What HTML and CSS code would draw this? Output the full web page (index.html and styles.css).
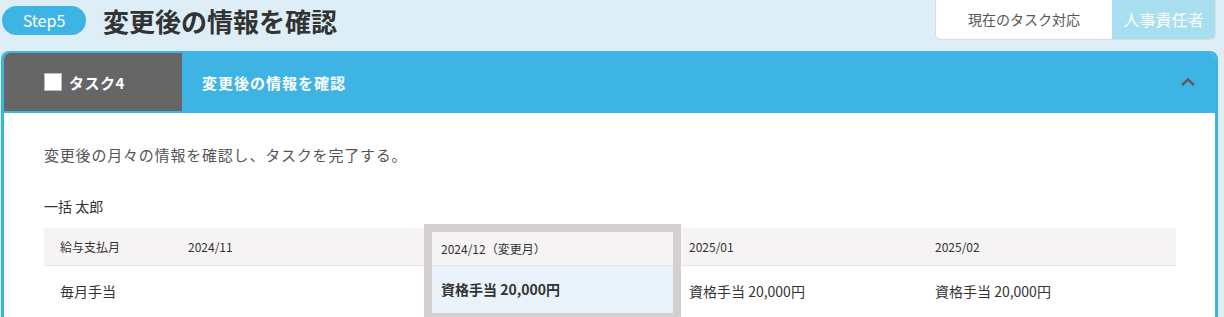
FILE: index.html
```html
<!DOCTYPE html>
<html lang="ja">
<head>
<meta charset="utf-8">
<title>Step5</title>
<link rel="stylesheet" href="styles.css">
</head>
<body>
<div class="page">
  <div class="topbar">
    <div class="step">Step5</div>
    <h1 class="title">変更後の情報を確認</h1>
    <div class="role">
      <span class="role-label">現在のタスク対応</span>
      <span class="role-name">人事責任者</span>
    </div>
  </div>
  <section class="card">
    <header class="card-head">
      <div class="task-tag"><span class="check"></span><span class="task-no">タスク4</span></div>
      <div class="task-title">変更後の情報を確認</div>
      <svg class="chev" width="14" height="8" viewBox="0 0 14 8"><path d="M1 7 L7 1.5 L13 7" fill="none" stroke="#5a5a5a" stroke-width="2.4"/></svg>
    </header>
    <div class="card-body">
      <p class="desc">変更後の月々の情報を確認し、タスクを完了する。</p>
      <p class="name">一括 太郎</p>
      <div class="table">
        <div class="col col-label">
          <div class="th">給与支払月</div>
          <div class="td">毎月手当</div>
        </div>
        <div class="col c1">
          <div class="th">2024/11</div>
          <div class="td"></div>
        </div>
        <div class="col c2 hl">
          <div class="th">2024/12（変更月）</div>
          <div class="td"><b>資格手当 20,000円</b></div>
        </div>
        <div class="col c3">
          <div class="th">2025/01</div>
          <div class="td">資格手当 20,000円</div>
        </div>
        <div class="col c4">
          <div class="th">2025/02</div>
          <div class="td">資格手当 20,000円</div>
        </div>
      </div>
    </div>
  </section>
</div>
</body>
</html>
```

FILE: styles.css
```css
html, body {
  margin: 0;
  padding: 0;
  background: #ddeef6;
  font-family: "Noto Sans CJK JP", "Noto Sans", sans-serif;
  color: #333;
}
.page {
  padding: 0 6px 0 1px;
}
.topbar {
  display: flex;
  align-items: center;
  height: 40px;
}
.step {
  margin-left: 1px;
  width: 84px;
  height: 29px;
  border-radius: 15px;
  background: #3eb4e5;
  color: #fff;
  font-size: 16px;
  line-height: 29px;
  text-align: center;
}
.title {
  margin: 1px 0 0 17px;
  font-size: 26px;
  font-weight: 700;
  color: #333;
  line-height: 36px;
  letter-spacing: 0;
}
.role {
  margin-left: auto;
  margin-right: 2px;
  align-self: flex-start;
  display: flex;
  height: 40px;
  border: 1px solid #dcdcdc;
  border-top: none;
  border-radius: 0 0 6px 6px;
  overflow: hidden;
  box-sizing: border-box;
}
.role-label {
  width: 176px;
  background: #fff;
  color: #555;
  font-size: 14px;
  text-align: center;
  line-height: 39px;
}
.role-name {
  width: 103px;
  background: #a7def0;
  color: #fff;
  font-size: 16px;
  text-align: center;
  line-height: 39px;
}
.card {
  margin-top: 11px;
  background: #fff;
  border: 3px solid #3eb4e5;
  border-top-width: 2px;
  border-bottom: none;
  border-radius: 8px 8px 0 0;
  overflow: hidden;
}
.card-head {
  display: flex;
  align-items: center;
  background: #3eb4e5;
  height: 60px;
  padding-bottom: 2px;
  box-sizing: border-box;
}
.task-tag {
  width: 178px;
  height: 58px;
  background: #666;
  display: flex;
  align-items: center;
  padding-left: 40px;
  box-sizing: border-box;
  border-radius: 6px 0 0 0;
}
.check {
  width: 16px;
  height: 16px;
  background: #fff;
  border: 1px solid #bbb;
  margin-right: 7px;
}
.task-no {
  color: #fff;
  font-size: 15px;
  font-weight: 700;
  letter-spacing: 0.5px;
}
.task-title {
  margin-left: 20px;
  color: #fff;
  font-size: 15px;
  font-weight: 700;
  letter-spacing: 1px;
}
.chev {
  margin-left: auto;
  margin-right: 20px;
}
.card-body {
  padding: 30px 39px 0 40px;
}
.desc {
  margin: 0;
  font-size: 15px;
  line-height: 24px;
  color: #555;
  letter-spacing: 0.8px;
}
.name {
  margin: 29px 0 0;
  font-size: 14px;
  line-height: 20px;
  color: #333;
}
.table {
  display: flex;
  margin-top: 12px;
  font-size: 12px;
}
.col {
  display: flex;
  flex-direction: column;
}
.th {
  height: 37px;
  line-height: 37px;
  background: #f5f3f3;
  border-bottom: 1px solid #e6e6e6;
  padding-left: 8px;
  color: #333;
}
.td {
  height: 51px;
  line-height: 51px;
  font-size: 14px;
  padding-left: 8px;
  color: #333;
}
.col-label { width: 136px; }
.col-label .th, .col-label .td { padding-left: 16px; }
.c1 { width: 244px; }
.c2 { width: 257px; }
.c3 { width: 246px; }
.c4 { width: 249px; }
.hl {
  margin-top: -4px;
  border: 8px solid #d4d0d0;
  box-sizing: border-box;
}
.hl .th {
  height: 33px;
  line-height: 33px;
  padding-left: 9px;
}
.hl .td {
  height: 47px;
  line-height: 47px;
  background: #eaf2fc;
  padding-left: 9px;
}
.hl .td b { font-weight: 700; }
```
